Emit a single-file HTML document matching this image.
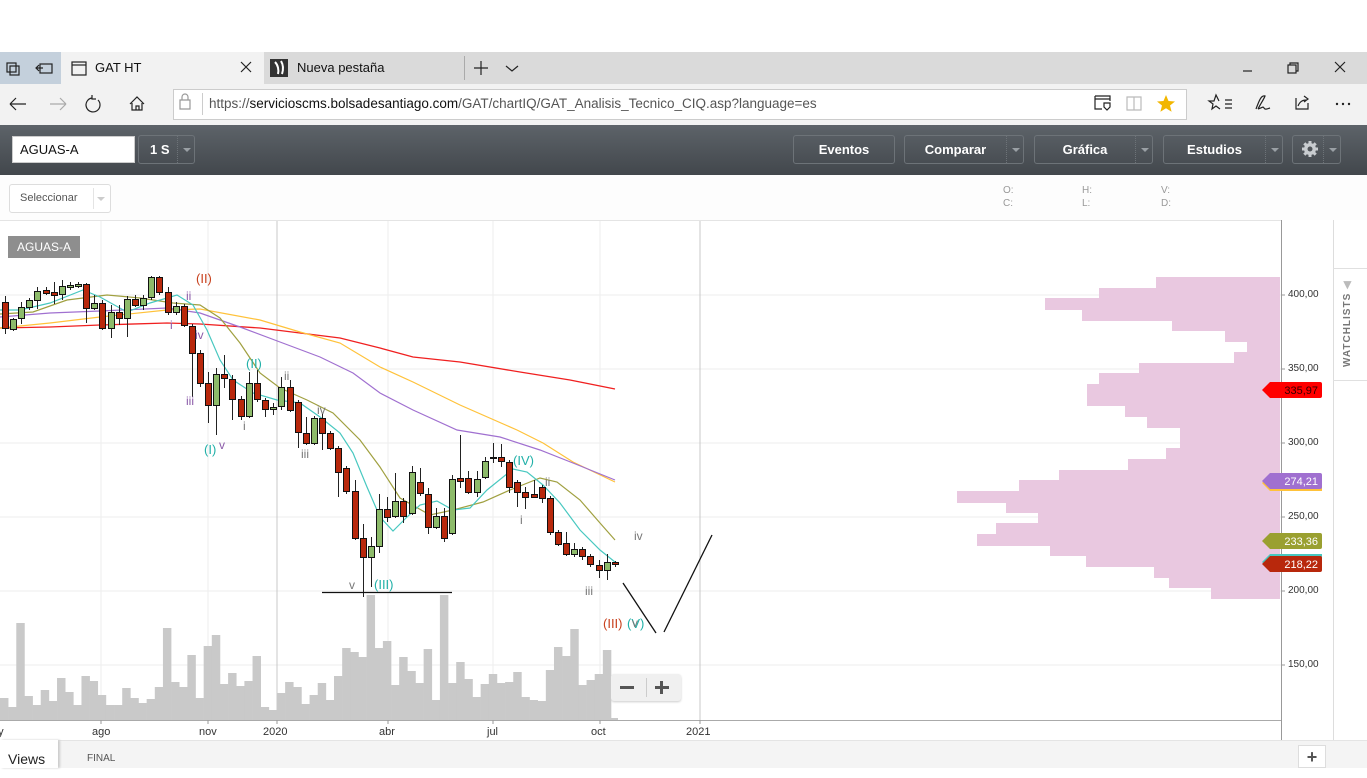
<!DOCTYPE html>
<html><head><meta charset="utf-8">
<style>
*{margin:0;padding:0;box-sizing:border-box}
body{width:1367px;height:768px;overflow:hidden;background:#fff;font-family:"Liberation Sans",sans-serif;position:relative}
.abs{position:absolute}
.tabbar{left:0;top:52px;width:1367px;height:32px;background:#dadada}
.addr{left:0;top:84px;width:1367px;height:41px;background:#f2f2f2}
.tool{left:0;top:125px;width:1367px;height:50px;background:linear-gradient(#5d6369,#42474c)}
.btn{position:absolute;top:135px;height:29px;border:1px solid #6d7378;border-radius:3px;color:#fff;font-weight:bold;font-size:13px;line-height:27px;text-align:center}
.dd{position:absolute;top:0;right:0;width:17px;height:27px;border-left:1px dotted #6d7378}
.dd:after{content:"";position:absolute;left:5px;top:12px;border:4px solid transparent;border-top:4px solid #9aa0a5}
.ax{position:absolute;left:1288px;font-size:10px;color:#333}
.dl{position:absolute;top:726px;font-size:11px;color:#333}
</style></head><body>
<div class="abs tabbar"></div>
<div class="abs" style="left:0;top:52px;width:61px;height:32px;background:#c4d0dc"></div>
<div class="abs" style="left:61px;top:52px;width:203px;height:32px;background:#f2f2f2"></div>
<div class="abs" style="left:464px;top:56px;width:1px;height:24px;background:#aaa"></div>
<svg class="abs" style="left:0;top:52px" width="1367" height="73">
<g fill="none" stroke="#222" stroke-width="1.2">
<rect x="7" y="11" width="9" height="9"/><rect x="10" y="14" width="9" height="9"/>
<rect x="40" y="12" width="12" height="9"/><path d="M36 16h7M39 13l-3 3 3 3"/>
<rect x="72" y="10" width="14" height="13"/><path d="M72 13h14"/>
<path d="M241 10l10 10M251 10l-10 10"/>
<path d="M474 16h14M481 9v14"/><path d="M506 14l6 5 6-5"/>
<path d="M1243 19h9"/><rect x="1288" y="13" width="8" height="8"/><path d="M1290 13v-2h8v8h-2"/>
<path d="M1335 10l10 10M1345 10l-10 10"/>
</g>
<rect x="270" y="7" width="18" height="18" fill="#333"/><path d="M275 10c3 3 4 8 3 12M281 9c3 5 2 10 1 13" stroke="#fff" stroke-width="2" fill="none"/>
</svg>
<div class="abs" style="left:95px;top:60px;font-size:13px;color:#111">GAT HT</div>
<div class="abs" style="left:297px;top:60px;font-size:13px;color:#111">Nueva pestaña</div>
<div class="abs addr"></div>
<div class="abs" style="left:173px;top:89px;width:1014px;height:31px;background:#fff;border:1px solid #ccc"></div>
<div class="abs" style="left:202px;top:93px;width:1px;height:22px;background:#ccc"></div>
<svg class="abs" style="left:0;top:84px" width="1367" height="41">
<g fill="none" stroke="#222" stroke-width="1.2">
<path d="M10 20h16M10 20l6-6M10 20l6 6"/>
<path stroke="#aaa" d="M50 20h16M66 20l-6-6M66 20l-6 6"/>
<path d="M92 14a7 7 0 1 0 6 2M92 11v4h4"/>
<path d="M130 20l7-7 7 7M132 19v7h10v-7M136 26v-4h3v4"/>
<path stroke="#999" d="M182 16v-3a3 3 0 0 1 6 0v3M180 16h10v9h-10z"/>
<path d="M1095 12h15v5M1095 12v13h7M1095 15h15M1104 19h6v4l-3 3-3-3z"/>
<path stroke="#bbb" d="M1127 13h7v13h-7zM1134 13h7v13h-7z"/>
<path d="M1219 17l-3-6-2 6-5 0 4 3-1 5 4-3 4 3M1225 16h7M1225 20h7M1225 24h7"/>
<path d="M1256 25c3-8 5-14 9-13-1 3-4 7-7 13M1258 25c4-1 5-3 6-1 1 2 3 1 6 0"/>
<path d="M1296 14v11h12v-6M1298 22c2-5 5-6 9-6M1304 12l4 3-4 3"/>
</g>
<g fill="#222"><circle cx="1337" cy="20" r="1.2"/><circle cx="1343" cy="20" r="1.2"/><circle cx="1349" cy="20" r="1.2"/></g>
<path d="M1166 11l2.5 6 6.5.5-5 4 1.6 6.3-5.6-3.5-5.6 3.5 1.6-6.3-5-4 6.5-.5z" fill="#f2b600"/>
</svg>
<div class="abs" style="left:209px;top:96px;font-size:13.5px;color:#555;white-space:nowrap">https://<span style="color:#111">servicioscms.bolsadesantiago.com</span>/GAT/chartIQ/GAT_Analisis_Tecnico_CIQ.asp?language=es</div>

<div class="abs tool"></div>
<div class="abs" style="left:12px;top:136px;width:123px;height:27px;background:#fff;border:1px solid #ccc;font-size:13px;line-height:25px;padding-left:7px;color:#111">AGUAS-A</div>
<div class="btn" style="left:138px;width:57px;text-align:left;padding-left:11px">1 S<div class="dd"></div></div>
<div class="btn" style="left:793px;width:102px">Eventos</div>
<div class="btn" style="left:904px;width:120px;padding-right:17px">Comparar<div class="dd"></div></div>
<div class="btn" style="left:1034px;width:119px;padding-right:17px">Gráfica<div class="dd"></div></div>
<div class="btn" style="left:1163px;width:120px;padding-right:17px">Estudios<div class="dd"></div></div>
<div class="btn" style="left:1292px;width:49px;text-align:left;padding-left:8px"><svg width="18" height="18" style="vertical-align:middle;margin-top:-3px"><g fill="#c8ccd0"><circle cx="9" cy="9" r="6"/><g stroke="#c8ccd0" stroke-width="3"><path d="M9 1v16M1 9h16M3.3 3.3l11.4 11.4M14.7 3.3L3.3 14.7"/></g></g><circle cx="9" cy="9" r="2.5" fill="#50555a"/></svg><div class="dd"></div></div>

<div class="abs" style="left:0;top:175px;width:1367px;height:45px;background:#fdfdfd"></div>
<div class="abs" style="left:9px;top:184px;width:102px;height:29px;border:1px solid #ddd;border-radius:3px;background:#fff;font-size:11px;color:#555;line-height:27px;padding-left:10px">Seleccionar<div style="position:absolute;left:83px;top:3px;width:1px;height:21px;background:#e4e4e4"></div><div style="position:absolute;left:87px;top:12px;border:4px solid transparent;border-top-color:#ccc"></div></div>
<div class="abs" style="left:1003px;top:184px;font-size:10px;color:#999;line-height:13px">O:<br>C:</div>
<div class="abs" style="left:1082px;top:184px;font-size:10px;color:#999;line-height:13px">H:<br>L:</div>
<div class="abs" style="left:1161px;top:184px;font-size:10px;color:#999;line-height:13px">V:<br>D:</div>

<svg class="abs" id="ch" style="left:0;top:0" width="1367" height="768"></svg>

<div class="abs" style="left:1333px;top:220px;width:34px;height:520px;background:#fff;border-left:1px solid #ddd"></div>
<div class="abs" style="left:1333px;top:268px;width:34px;height:1px;background:#e0e0e0"></div>
<div class="abs" style="left:1333px;top:380px;width:34px;height:1px;background:#e0e0e0"></div>
<div class="abs" style="left:1342px;top:367px;transform:rotate(-90deg);transform-origin:0 0;font-size:10px;color:#777;letter-spacing:1px;font-weight:bold;white-space:nowrap">WATCHLISTS <span style="color:#bbb">◀</span></div>

<div class="ax" style="top:289px">400,00</div>
<div class="ax" style="top:363px">350,00</div>
<div class="ax" style="top:437px">300,00</div>
<div class="ax" style="top:511px">250,00</div>
<div class="ax" style="top:585px">200,00</div>
<div class="ax" style="top:659px">150,00</div>

<div class="abs" style="left:8px;top:236px;width:72px;height:22px;background:#8e8e8e;color:#fff;font-size:12px;line-height:22px;text-align:center">AGUAS-A</div>

<div class="dl" style="left:-8px">ay</div>
<div class="dl" style="left:92px">ago</div>
<div class="dl" style="left:199px">nov</div>
<div class="dl" style="left:263px">2020</div>
<div class="dl" style="left:379px">abr</div>
<div class="dl" style="left:487px">jul</div>
<div class="dl" style="left:591px">oct</div>
<div class="dl" style="left:686px">2021</div>

<div class="abs" style="left:0;top:740px;width:1367px;height:28px;background:#f4f4f4;border-top:1px solid #e4e4e4"></div>
<div class="abs" style="left:0;top:740px;width:58px;height:28px;background:#fff;box-shadow:2px 0 2px #ccc;font-size:14px;line-height:38px;padding-left:8px;color:#222">Views</div>
<div class="abs" style="left:87px;top:753px;font-size:10px;color:#555">FINAL</div>
<div class="abs" style="left:1298px;top:745px;width:28px;height:23px;background:#fff;border:1px solid #ddd;text-align:center;font-size:18px;font-weight:bold;color:#555;line-height:22px">+</div>

<div class="abs" style="left:611px;top:674px;width:70px;height:27px;background:#f0f0f0;border-radius:3px;box-shadow:0 1px 2px #ccc"></div>
<div class="abs" style="left:646px;top:678px;width:1px;height:19px;background:#ccc"></div>
<div class="abs" style="left:620px;top:686px;width:14px;height:3px;background:#555"></div>
<div class="abs" style="left:655px;top:686px;width:14px;height:3px;background:#555"></div>
<div class="abs" style="left:660px;top:681px;width:3px;height:13px;background:#555"></div>

<script>
var s='';
[295,369,443,517,591,665].forEach(function(y){s+='<line x1="0" x2="1281" y1="'+y+'" y2="'+y+'" stroke="#eeeeee"/>';});
[101,208,388,493,600].forEach(function(x){s+='<line y1="220" y2="720" x1="'+x+'" x2="'+x+'" stroke="#eeeeee"/>';});
[277,700].forEach(function(x){s+='<line y1="220" y2="720" x1="'+x+'" x2="'+x+'" stroke="#c8c8c8"/>';});
s+='<line x1="0" x2="1281" y1="220.5" y2="220.5" stroke="#e4e4e4"/>';
var pf=[[277,1156],[288,1099],[298,1045],[310,1082],[321,1172],[331,1225],[342,1247],[352,1234],[363,1139],[373,1099],[384,1087],[406,1125],[417,1147],[428,1180],[448,1166],[459,1128],[470,1059],[480,1019],[491,957],[503,1006],[513,1038],[523,996],[534,977],[546,1050],[556,1086],[567,1154],[578,1169],[588,1211],[599,0]];
for(var i=0;i<pf.length-1;i++){s+='<rect x="'+pf[i][1]+'" y="'+pf[i][0]+'" width="'+(1280-pf[i][1])+'" height="'+(pf[i+1][0]-pf[i][0])+'" fill="#e9c8e0"/>';}
var v=[698,707,623,696,705,690,701,678,692,705,676,681,695,705,705,688,698,703,699,687,628,682,687,655,698,646,635,684,673,686,681,656,707,710,693,682,687,704,695,683,700,676,648,652,657,595,648,641,685,657,671,683,649,700,595,683,662,679,697,684,674,683,682,672,697,700,701,670,647,656,629,685,680,674,650];
var bw=611/v.length;
for(var i=0;i<v.length;i++){s+='<rect x="'+(i*bw).toFixed(2)+'" y="'+v[i]+'" width="'+(bw+0.3).toFixed(2)+'" height="'+(720-v[i])+'" fill="#c9c9c9"/>';}
s+='<rect x="611" y="718" width="7" height="2" fill="#c9c9c9"/>';
s+='<line x1="1281.5" x2="1281.5" y1="220" y2="740" stroke="#999"/>';
s+='<line x1="0" x2="1281" y1="720.5" y2="720.5" stroke="#aaa"/>';
[295,369,443,517,591,665].forEach(function(y){s+='<line x1="1281" x2="1285" y1="'+y+'" y2="'+y+'" stroke="#999"/>';});
[101,208,277,388,493,600,700].forEach(function(x){s+='<line y1="720" y2="724" x1="'+x+'" x2="'+x+'" stroke="#999"/>';});
function pl(p,c,w){s+='<polyline fill="none" stroke="'+c+'" stroke-width="'+(w||1.2)+'" points="'+p+'"/>';}
pl('0,328 50,327 100,325 167,323 200,324 260,328 300,333 340,338 380,348 413,357 460,362 520,372 570,380 615,389','#f02020',1.3);
pl('0,328 50,323 100,317 167,310 200,309 260,320 300,332 340,343 380,367 413,382 460,405 517,430 543,443 573,462 615,482','#ffc23a');
pl('0,317 50,313 100,311 167,308 200,313 240,327 280,342 320,357 353,373 380,393 413,410 457,430 500,437 540,450 573,463 615,480','#a070d0');
pl('0,314 33,312 67,300 107,295 140,298 173,303 200,305 220,318 240,343 260,373 280,388 307,400 333,413 360,440 380,467 400,498 430,515 453,510 483,502 510,490 540,478 557,482 580,500 600,523 615,540','#a0a040');
pl('0,310 20,310 50,303 83,290 100,297 127,312 150,303 177,295 193,305 207,330 220,360 233,380 253,393 277,400 300,403 320,417 340,433 353,453 367,487 380,517 393,531 407,517 420,505 437,501 453,510 470,508 487,490 513,469 527,472 543,485 560,503 580,530 600,550 615,562','#48c8c0');
var c=[[5,302,328,296,334,'r'],[13,319,329,318,331,'g'],[21,307,318,302,324,'g'],[29,300,307,298,310,'g'],[37,291,300,287,309,'g'],[46,290,293,287,295,'r'],[54,292,295,282,304,'r'],[62,286,294,280,300,'g'],[70,285,287,282,290,'g'],[78,284,286,282,288,'g'],[86,284,308,283,323,'r'],[94,303,308,295,310,'g'],[102,303,328,300,330,'r'],[111,312,328,305,338,'g'],[119,312,318,305,325,'r'],[127,299,318,296,337,'g'],[135,299,305,295,307,'r'],[143,298,305,295,310,'g'],[151,277,297,276,300,'g'],[159,277,292,276,295,'r'],[168,292,312,287,315,'r'],[176,306,312,302,315,'g'],[184,306,325,304,327,'r'],[192,326,353,324,397,'r'],[200,353,383,350,387,'r'],[208,383,405,372,423,'r'],[216,374,405,368,435,'g'],[224,374,378,355,388,'r'],[232,379,399,375,420,'r'],[241,399,416,396,420,'r'],[249,383,416,372,418,'g'],[257,383,399,370,402,'r'],[265,400,409,398,417,'r'],[273,407,409,403,415,'g'],[281,387,406,377,410,'g'],[290,387,410,380,412,'r'],[298,402,432,400,448,'r'],[306,433,443,417,445,'r'],[314,418,443,416,445,'g'],[322,418,433,413,450,'r'],[330,433,448,431,450,'r'],[338,448,472,446,497,'r'],[346,468,491,466,494,'r'],[355,491,538,480,540,'r'],[363,538,557,524,597,'r'],[371,546,557,537,587,'g'],[379,509,546,494,553,'g'],[387,509,517,497,522,'r'],[395,501,516,473,518,'g'],[403,501,516,498,523,'r'],[412,472,513,466,515,'g'],[420,482,493,468,496,'r'],[428,494,527,488,534,'r'],[436,516,527,508,529,'g'],[444,516,538,508,542,'r'],[452,479,533,475,535,'g'],[460,478,481,435,488,'r'],[468,478,492,471,494,'r'],[477,479,492,471,497,'g'],[485,461,477,457,479,'g'],[493,457,458,443,463,'g'],[501,457,461,444,467,'r'],[509,462,487,460,493,'r'],[517,482,492,480,507,'r'],[525,492,497,487,509,'r'],[534,494,497,480,498,'r'],[542,487,498,485,503,'r'],[550,498,532,496,535,'r'],[558,532,544,530,546,'r'],[566,543,554,532,556,'r'],[574,549,554,543,557,'g'],[582,549,556,547,560,'r'],[590,556,564,554,567,'r'],[599,565,570,560,578,'r'],[607,562,570,554,580,'g'],[615,562,564,561,567,'r']];
c.forEach(function(k){s+='<line x1="'+k[0]+'.5" x2="'+k[0]+'.5" y1="'+k[3]+'" y2="'+k[4]+'" stroke="#222"/>';
s+='<rect x="'+(k[0]-2.5)+'" y="'+k[1]+'.5" width="6" height="'+Math.max(1,k[2]-k[1])+'" fill="'+(k[5]=='g'?'#8dbb6a':'#b8280c')+'" stroke="#111"/>';});
s+='<line x1="322" x2="452" y1="592.5" y2="592.5" stroke="#111" stroke-width="1.3"/>';
s+='<polyline points="623,583 656,633" fill="none" stroke="#111" stroke-width="1.3"/><polyline points="664,632 712,535" fill="none" stroke="#111" stroke-width="1.3"/>';
function t(x,y,txt,col,sz){s+='<text x="'+x+'" y="'+y+'" fill="'+col+'" font-size="'+(sz||13)+'" font-family="Liberation Sans, sans-serif">'+txt+'</text>';}
var R='#c8401c',T='#20b0a8',P='#8a5aa8',G='#777';
t(196,283,'(II)',R);t(186,300,'ii',P,12);t(170,329,'i',P,12);t(195,339,'iv',P,12);t(186,405,'iii',P,12);t(219,449,'v',P,12);t(204,454,'(I)',T);
t(246,368,'(II)',T);t(284,380,'ii',G,12);t(243,430,'i',G,12);t(317,414,'iv',G,12);t(301,458,'iii',G,12);t(349,589,'v',G,12);t(374,589,'(III)',T);
t(513,465,'(IV)',T);t(545,486,'ii',G,12);t(520,524,'i',G,12);t(585,595,'iii',G,12);t(634,540,'iv',G,12);
t(603,628,'(III)',R);t(627,628,'(V)',T);t(632,627,'v',G,12);
function tag(y,col,txt,tc){s+='<path d="M1262 '+y+'l8-8h50a2 2 0 0 1 2 2v12a2 2 0 0 1-2 2h-50z" fill="'+col+'"/>';s+='<text x="1318" y="'+(y+4)+'" text-anchor="end" fill="'+(tc||'#fff')+'" font-size="11" font-family="Liberation Sans, sans-serif">'+txt+'</text>';}
tag(390,'#ff0000','335,97','#300');
s+='<path d="M1262 483l8-8h52v16h-52z" fill="#ffc23a"/>';
tag(481,'#a070d0','274,21');
tag(541,'#9aa030','233,36');
s+='<path d="M1262 562l8-8h52v16h-52z" fill="#48c8c0"/>';
tag(564,'#b8280c','218,22');
document.getElementById('ch').innerHTML=s;
</script>
</body></html>
